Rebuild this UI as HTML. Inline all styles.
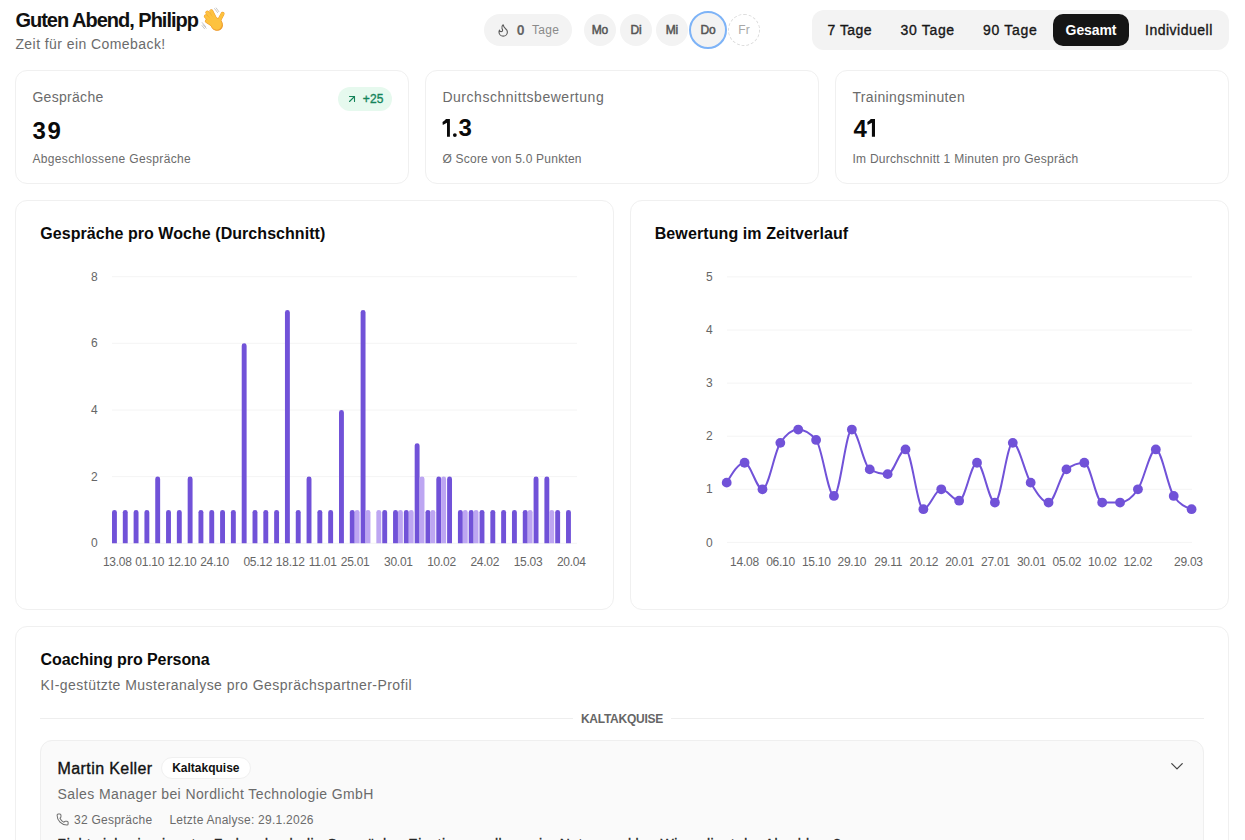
<!DOCTYPE html>
<html><head><meta charset="utf-8"><title>Dashboard</title>
<style>
html,body{margin:0;padding:0;background:#fff;width:1245px;height:840px;overflow:hidden;position:relative}
body{font-family:"Liberation Sans", sans-serif}
.t{position:absolute;white-space:nowrap}
.b{position:absolute}
</style></head><body>
<div class="t" style="left:15.40px;top:10.27px;font-size:20px;line-height:20px;font-weight:700;color:#111;letter-spacing:-1.0px;">Guten Abend, Philipp</div>
<svg class="b" style="left:196px;top:4px" width="36" height="30" viewBox="0 0 36 30">
<g stroke="#b9b9b9" stroke-width="0.8" stroke-linecap="round">
<line x1="18.6" y1="4.6" x2="21.6" y2="8.6"/><line x1="20.2" y1="4.0" x2="22.8" y2="7.6"/>
<line x1="6.2" y1="18.6" x2="9.6" y2="22.6"/><line x1="7.2" y1="20.8" x2="10.2" y2="24.2"/><line x1="6.0" y1="21.6" x2="8.6" y2="24.8"/>
</g>
<g stroke="#ee9b2c" stroke-linecap="round" stroke-width="3.9" fill="#ee9b2c">
<line x1="19.5" y1="15.5" x2="15.3" y2="7.2"/><line x1="17.5" y1="16.5" x2="11.3" y2="8.5"/>
<line x1="16.5" y1="18.5" x2="9.8" y2="12.3"/><line x1="17" y1="21" x2="10.8" y2="17"/>
<line x1="22.5" y1="17.5" x2="26.6" y2="9.8"/>
<ellipse cx="20.6" cy="20.2" rx="5.6" ry="6.4" transform="rotate(-35 20.6 20.2)" stroke-width="1"/>
</g>
<g stroke="#fdc23f" stroke-linecap="round" stroke-width="3.0" fill="#fdc23f">
<line x1="19.5" y1="15.5" x2="15.3" y2="7.2"/><line x1="17.5" y1="16.5" x2="11.3" y2="8.5"/>
<line x1="16.5" y1="18.5" x2="9.8" y2="12.3"/><line x1="17" y1="21" x2="10.8" y2="17"/>
<line x1="22.5" y1="17.5" x2="26.6" y2="9.8"/>
<ellipse cx="20.3" cy="19.9" rx="5.3" ry="6.0" transform="rotate(-35 20.3 19.9)" stroke="none"/>
</g>
</svg>
<div class="t" style="left:15.40px;top:36.75px;font-size:14px;line-height:14px;font-weight:400;color:#6b6b6b;letter-spacing:0.43px;">Zeit für ein Comeback!</div>
<div class="b" style="left:484px;top:14px;width:88px;height:32px;background:#f3f3f3;border-radius:16px"></div>
<svg class="b" style="left:495.8px;top:23px" width="14.4" height="14.4" viewBox="0 0 24 24" fill="none" stroke="#5a5a5a" stroke-width="1.9" stroke-linecap="round" stroke-linejoin="round"><path d="M8.5 14.5A2.5 2.5 0 0 0 11 12c0-1.38-.5-2-1-3-1.072-2.143-.224-4.054 2-6 .5 2.5 2 4.9 4 6.5 2 1.6 3 3.5 3 5.5a7 7 0 1 1-14 0c0-1.153.433-2.294 1-3a2.5 2.5 0 0 0 2.5 2.5z"/></svg>
<div class="t" style="left:516.70px;top:22.75px;font-size:14px;line-height:14px;font-weight:700;color:#666;letter-spacing:0.5px;">0</div>
<div class="t" style="left:532.00px;top:23.84px;font-size:12px;line-height:12px;font-weight:400;color:#8a8a8a;letter-spacing:0.3px;">Tage</div>
<div class="b" style="left:584px;top:14px;width:32px;height:32px;background:#f3f3f3;border-radius:50%"></div>
<div class="t" style="left:580.00px;width:40px;text-align:center;top:23.64px;font-size:12px;line-height:12px;font-weight:400;color:#555;letter-spacing:-0.1px;text-indent:-0.1px;-webkit-text-stroke:0.5px currentColor">Mo</div>
<div class="b" style="left:620px;top:14px;width:32px;height:32px;background:#f3f3f3;border-radius:50%"></div>
<div class="t" style="left:616.00px;width:40px;text-align:center;top:23.64px;font-size:12px;line-height:12px;font-weight:400;color:#555;letter-spacing:-0.1px;text-indent:-0.1px;-webkit-text-stroke:0.5px currentColor">Di</div>
<div class="b" style="left:656px;top:14px;width:32px;height:32px;background:#f3f3f3;border-radius:50%"></div>
<div class="t" style="left:652.00px;width:40px;text-align:center;top:23.64px;font-size:12px;line-height:12px;font-weight:400;color:#555;letter-spacing:-0.1px;text-indent:-0.1px;-webkit-text-stroke:0.5px currentColor">Mi</div>
<div class="b" style="left:689px;top:11px;width:38px;height:38px;background:#f3f3f3;border:2px solid #7db3f7;border-radius:50%;box-sizing:border-box"></div>
<div class="t" style="left:688.00px;width:40px;text-align:center;top:23.64px;font-size:12px;line-height:12px;font-weight:400;color:#555;letter-spacing:-0.1px;text-indent:-0.1px;-webkit-text-stroke:0.5px currentColor">Do</div>
<div class="b" style="left:728px;top:14px;width:32px;height:32px;border:1px dashed #dcdcdc;border-radius:50%;box-sizing:border-box"></div>
<div class="t" style="left:724.00px;width:40px;text-align:center;top:23.64px;font-size:12px;line-height:12px;font-weight:400;color:#a8a8a8;letter-spacing:0px;text-indent:0px;">Fr</div>
<div class="b" style="left:812px;top:10px;width:417px;height:40px;background:#f3f3f3;border-radius:12px"></div>
<div class="b" style="left:1053px;top:14px;width:76px;height:32px;background:#151515;border-radius:10px"></div>
<div class="t" style="left:827.60px;top:23.15px;font-size:14px;line-height:14px;font-weight:400;color:#171717;letter-spacing:0.45px;-webkit-text-stroke:0.35px currentColor">7 Tage</div>
<div class="t" style="left:900.40px;top:23.15px;font-size:14px;line-height:14px;font-weight:400;color:#171717;letter-spacing:0.7px;-webkit-text-stroke:0.35px currentColor">30 Tage</div>
<div class="t" style="left:983.00px;top:23.15px;font-size:14px;line-height:14px;font-weight:400;color:#171717;letter-spacing:0.7px;-webkit-text-stroke:0.35px currentColor">90 Tage</div>
<div class="t" style="left:1065.60px;top:23.15px;font-size:14px;line-height:14px;font-weight:700;color:#ffffff;letter-spacing:-0.1px;">Gesamt</div>
<div class="t" style="left:1145.00px;top:23.15px;font-size:14px;line-height:14px;font-weight:400;color:#171717;letter-spacing:0.5px;-webkit-text-stroke:0.35px currentColor">Individuell</div>
<div class="b" style="left:15px;top:70px;width:394px;height:114px;border:1px solid #f0f0f0;border-radius:12px;box-sizing:border-box;background:#fff"></div>
<div class="t" style="left:32.40px;top:89.85px;font-size:14px;line-height:14px;font-weight:400;color:#6b6b6b;letter-spacing:0.3px;">Gespräche</div>
<div class="t" style="left:32.40px;top:118.68px;font-size:24px;line-height:24px;font-weight:700;color:#0a0a0a;letter-spacing:0px;">3</div>
<div class="t" style="left:47.50px;top:118.68px;font-size:24px;line-height:24px;font-weight:700;color:#0a0a0a;letter-spacing:0px;">9</div>
<div class="t" style="left:32.40px;top:152.64px;font-size:12px;line-height:12px;font-weight:400;color:#6b6b6b;letter-spacing:0.36px;">Abgeschlossene Gespräche</div>
<div class="b" style="left:425px;top:70px;width:394px;height:114px;border:1px solid #f0f0f0;border-radius:12px;box-sizing:border-box;background:#fff"></div>
<div class="t" style="left:442.40px;top:89.85px;font-size:14px;line-height:14px;font-weight:400;color:#6b6b6b;letter-spacing:0.53px;">Durchschnittsbewertung</div>
<div class="t" style="left:458.40px;top:116.38px;font-size:24px;line-height:24px;font-weight:700;color:#0a0a0a;letter-spacing:0px;">3</div>
<div class="t" style="left:442.40px;top:152.64px;font-size:12px;line-height:12px;font-weight:400;color:#6b6b6b;letter-spacing:0.23px;">Ø Score von 5.0 Punkten</div>
<div class="b" style="left:835px;top:70px;width:394px;height:114px;border:1px solid #f0f0f0;border-radius:12px;box-sizing:border-box;background:#fff"></div>
<div class="t" style="left:852.40px;top:89.85px;font-size:14px;line-height:14px;font-weight:400;color:#6b6b6b;letter-spacing:0.37px;">Trainingsminuten</div>
<div class="t" style="left:853.40px;top:116.58px;font-size:24px;line-height:24px;font-weight:700;color:#0a0a0a;letter-spacing:0px;">4</div>
<div class="t" style="left:852.40px;top:152.64px;font-size:12px;line-height:12px;font-weight:400;color:#6b6b6b;letter-spacing:0.28px;">Im Durchschnitt 1 Minuten pro Gespräch</div>
<svg class="b" style="left:0;top:0" width="1245" height="200"><g fill="#0a0a0a"><path d="M447,119.1 L449.9,119.1 L449.9,136.7 L447,136.7 L447,122.8 L442.8,125.0 L442.5,122.1 Q444.9,120.6 446.0,119.1 Z"/><circle cx="454.85" cy="135.1" r="1.9"/><path d="M871.9,119.1 L875,119.1 L875,136.8 L871.9,136.8 L871.9,122.8 L867.6,125.0 L867.3,122.1 Q869.7,120.6 870.8,119.1 Z"/></g></svg>
<div class="b" style="left:338px;top:87px;width:54px;height:24px;background:#e6f9ee;border-radius:12px"></div>
<svg class="b" style="left:346px;top:93px" width="12" height="12" viewBox="0 0 24 24" fill="none" stroke="#15845a" stroke-width="2.2" stroke-linecap="round" stroke-linejoin="round"><path d="M7 7h10v10"/><path d="M7 17 17 7"/></svg>
<div class="t" style="left:362.80px;top:92.84px;font-size:12px;line-height:12px;font-weight:400;color:#15845a;letter-spacing:0.1px;-webkit-text-stroke:0.35px currentColor">+25</div>
<div class="b" style="left:15px;top:200px;width:599px;height:410px;border:1px solid #f0f0f0;border-radius:12px;box-sizing:border-box;background:#fff"></div>
<div class="b" style="left:630px;top:200px;width:599px;height:410px;border:1px solid #f0f0f0;border-radius:12px;box-sizing:border-box;background:#fff"></div>
<div class="t" style="left:40.30px;top:226.06px;font-size:16px;line-height:16px;font-weight:700;color:#0a0a0a;letter-spacing:0.05px;">Gespräche pro Woche (Durchschnitt)</div>
<div class="t" style="left:654.70px;top:226.06px;font-size:16px;line-height:16px;font-weight:700;color:#0a0a0a;letter-spacing:0.1px;">Bewertung im Zeitverlauf</div>
<svg class="b" style="left:0;top:0" width="1245" height="840">
<line x1="112" y1="543.3" x2="577" y2="543.3" stroke="#f4f4f4" stroke-width="1"/>
<line x1="112" y1="476.6" x2="577" y2="476.6" stroke="#f4f4f4" stroke-width="1"/>
<line x1="112" y1="410.0" x2="577" y2="410.0" stroke="#f4f4f4" stroke-width="1"/>
<line x1="112" y1="343.3" x2="577" y2="343.3" stroke="#f4f4f4" stroke-width="1"/>
<line x1="112" y1="276.7" x2="577" y2="276.7" stroke="#f4f4f4" stroke-width="1"/>
<path d="M112.00,543.30 V512.37 A2.4,2.4 0 0 1 116.90,512.37 V543.30 Z" fill="#7152d8"/>
<path d="M122.81,543.30 V512.37 A2.4,2.4 0 0 1 127.71,512.37 V543.30 Z" fill="#7152d8"/>
<path d="M133.62,543.30 V512.37 A2.4,2.4 0 0 1 138.52,512.37 V543.30 Z" fill="#7152d8"/>
<path d="M144.43,543.30 V512.37 A2.4,2.4 0 0 1 149.33,512.37 V543.30 Z" fill="#7152d8"/>
<path d="M155.24,543.30 V479.04 A2.4,2.4 0 0 1 160.14,479.04 V543.30 Z" fill="#7152d8"/>
<path d="M166.05,543.30 V512.37 A2.4,2.4 0 0 1 170.95,512.37 V543.30 Z" fill="#7152d8"/>
<path d="M176.86,543.30 V512.37 A2.4,2.4 0 0 1 181.76,512.37 V543.30 Z" fill="#7152d8"/>
<path d="M187.67,543.30 V479.04 A2.4,2.4 0 0 1 192.57,479.04 V543.30 Z" fill="#7152d8"/>
<path d="M198.48,543.30 V512.37 A2.4,2.4 0 0 1 203.38,512.37 V543.30 Z" fill="#7152d8"/>
<path d="M209.29,543.30 V512.37 A2.4,2.4 0 0 1 214.19,512.37 V543.30 Z" fill="#7152d8"/>
<path d="M220.10,543.30 V512.37 A2.4,2.4 0 0 1 225.00,512.37 V543.30 Z" fill="#7152d8"/>
<path d="M230.91,543.30 V512.37 A2.4,2.4 0 0 1 235.81,512.37 V543.30 Z" fill="#7152d8"/>
<path d="M241.72,543.30 V345.72 A2.4,2.4 0 0 1 246.62,345.72 V543.30 Z" fill="#7152d8"/>
<path d="M252.53,543.30 V512.37 A2.4,2.4 0 0 1 257.43,512.37 V543.30 Z" fill="#7152d8"/>
<path d="M263.34,543.30 V512.37 A2.4,2.4 0 0 1 268.24,512.37 V543.30 Z" fill="#7152d8"/>
<path d="M274.15,543.30 V512.37 A2.4,2.4 0 0 1 279.05,512.37 V543.30 Z" fill="#7152d8"/>
<path d="M284.96,543.30 V312.39 A2.4,2.4 0 0 1 289.86,312.39 V543.30 Z" fill="#7152d8"/>
<path d="M295.77,543.30 V512.37 A2.4,2.4 0 0 1 300.67,512.37 V543.30 Z" fill="#7152d8"/>
<path d="M306.58,543.30 V479.04 A2.4,2.4 0 0 1 311.48,479.04 V543.30 Z" fill="#7152d8"/>
<path d="M317.39,543.30 V512.37 A2.4,2.4 0 0 1 322.29,512.37 V543.30 Z" fill="#7152d8"/>
<path d="M328.20,543.30 V512.37 A2.4,2.4 0 0 1 333.10,512.37 V543.30 Z" fill="#7152d8"/>
<path d="M339.01,543.30 V412.38 A2.4,2.4 0 0 1 343.91,412.38 V543.30 Z" fill="#7152d8"/>
<path d="M349.82,543.30 V512.37 A2.4,2.4 0 0 1 354.72,512.37 V543.30 Z" fill="#7152d8"/>
<path d="M354.72,543.30 V512.37 A2.4,2.4 0 0 1 359.62,512.37 V543.30 Z" fill="#bda6f2"/>
<path d="M360.63,543.30 V312.39 A2.4,2.4 0 0 1 365.53,312.39 V543.30 Z" fill="#7152d8"/>
<path d="M365.53,543.30 V512.37 A2.4,2.4 0 0 1 370.43,512.37 V543.30 Z" fill="#bda6f2"/>
<path d="M376.34,543.30 V512.37 A2.4,2.4 0 0 1 381.24,512.37 V543.30 Z" fill="#bda6f2"/>
<path d="M382.25,543.30 V512.37 A2.4,2.4 0 0 1 387.15,512.37 V543.30 Z" fill="#7152d8"/>
<path d="M393.06,543.30 V512.37 A2.4,2.4 0 0 1 397.96,512.37 V543.30 Z" fill="#7152d8"/>
<path d="M397.96,543.30 V512.37 A2.4,2.4 0 0 1 402.86,512.37 V543.30 Z" fill="#bda6f2"/>
<path d="M403.87,543.30 V512.37 A2.4,2.4 0 0 1 408.77,512.37 V543.30 Z" fill="#7152d8"/>
<path d="M408.77,543.30 V512.37 A2.4,2.4 0 0 1 413.67,512.37 V543.30 Z" fill="#bda6f2"/>
<path d="M414.68,543.30 V445.71 A2.4,2.4 0 0 1 419.58,445.71 V543.30 Z" fill="#7152d8"/>
<path d="M419.58,543.30 V479.04 A2.4,2.4 0 0 1 424.48,479.04 V543.30 Z" fill="#bda6f2"/>
<path d="M425.49,543.30 V512.37 A2.4,2.4 0 0 1 430.39,512.37 V543.30 Z" fill="#7152d8"/>
<path d="M430.39,543.30 V512.37 A2.4,2.4 0 0 1 435.29,512.37 V543.30 Z" fill="#bda6f2"/>
<path d="M436.30,543.30 V479.04 A2.4,2.4 0 0 1 441.20,479.04 V543.30 Z" fill="#7152d8"/>
<path d="M441.20,543.30 V479.04 A2.4,2.4 0 0 1 446.10,479.04 V543.30 Z" fill="#bda6f2"/>
<path d="M447.11,543.30 V479.04 A2.4,2.4 0 0 1 452.01,479.04 V543.30 Z" fill="#7152d8"/>
<path d="M457.92,543.30 V512.37 A2.4,2.4 0 0 1 462.82,512.37 V543.30 Z" fill="#7152d8"/>
<path d="M462.82,543.30 V512.37 A2.4,2.4 0 0 1 467.72,512.37 V543.30 Z" fill="#bda6f2"/>
<path d="M468.73,543.30 V512.37 A2.4,2.4 0 0 1 473.63,512.37 V543.30 Z" fill="#7152d8"/>
<path d="M473.63,543.30 V512.37 A2.4,2.4 0 0 1 478.53,512.37 V543.30 Z" fill="#bda6f2"/>
<path d="M479.54,543.30 V512.37 A2.4,2.4 0 0 1 484.44,512.37 V543.30 Z" fill="#7152d8"/>
<path d="M490.35,543.30 V512.37 A2.4,2.4 0 0 1 495.25,512.37 V543.30 Z" fill="#7152d8"/>
<path d="M501.16,543.30 V512.37 A2.4,2.4 0 0 1 506.06,512.37 V543.30 Z" fill="#7152d8"/>
<path d="M511.97,543.30 V512.37 A2.4,2.4 0 0 1 516.87,512.37 V543.30 Z" fill="#7152d8"/>
<path d="M522.78,543.30 V512.37 A2.4,2.4 0 0 1 527.68,512.37 V543.30 Z" fill="#7152d8"/>
<path d="M527.68,543.30 V512.37 A2.4,2.4 0 0 1 532.58,512.37 V543.30 Z" fill="#bda6f2"/>
<path d="M533.59,543.30 V479.04 A2.4,2.4 0 0 1 538.49,479.04 V543.30 Z" fill="#7152d8"/>
<path d="M544.40,543.30 V479.04 A2.4,2.4 0 0 1 549.30,479.04 V543.30 Z" fill="#7152d8"/>
<path d="M549.30,543.30 V512.37 A2.4,2.4 0 0 1 554.20,512.37 V543.30 Z" fill="#bda6f2"/>
<path d="M555.21,543.30 V512.37 A2.4,2.4 0 0 1 560.11,512.37 V543.30 Z" fill="#7152d8"/>
<path d="M566.02,543.30 V512.37 A2.4,2.4 0 0 1 570.92,512.37 V543.30 Z" fill="#7152d8"/>
<line x1="727" y1="542.4" x2="1192" y2="542.4" stroke="#f4f4f4" stroke-width="1"/>
<line x1="727" y1="489.3" x2="1192" y2="489.3" stroke="#f4f4f4" stroke-width="1"/>
<line x1="727" y1="436.2" x2="1192" y2="436.2" stroke="#f4f4f4" stroke-width="1"/>
<line x1="727" y1="383.1" x2="1192" y2="383.1" stroke="#f4f4f4" stroke-width="1"/>
<line x1="727" y1="330.0" x2="1192" y2="330.0" stroke="#f4f4f4" stroke-width="1"/>
<line x1="727" y1="276.9" x2="1192" y2="276.9" stroke="#f4f4f4" stroke-width="1"/>
<path d="M726.70,482.66 C732.66,472.71 738.62,462.75 744.58,462.75 C750.54,462.75 756.50,489.30 762.46,489.30 C768.42,489.30 774.38,451.69 780.34,442.84 C786.30,433.99 792.26,429.56 798.22,429.56 C804.18,429.56 810.14,433.01 816.10,439.92 C822.06,446.82 828.02,495.94 833.98,495.94 C839.94,495.94 845.90,429.56 851.86,429.56 C857.82,429.56 863.78,466.23 869.74,469.39 C875.70,472.55 881.66,474.13 887.62,474.13 C893.58,474.13 899.54,449.47 905.50,449.47 C911.46,449.47 917.42,509.21 923.38,509.21 C929.34,509.21 935.30,489.30 941.26,489.30 C947.22,489.30 953.18,500.68 959.14,500.68 C965.10,500.68 971.06,462.75 977.02,462.75 C982.98,462.75 988.94,502.57 994.90,502.57 C1000.86,502.57 1006.82,442.84 1012.78,442.84 C1018.74,442.84 1024.70,472.71 1030.66,482.66 C1036.62,492.62 1042.58,502.57 1048.54,502.57 C1054.50,502.57 1060.46,473.81 1066.42,469.39 C1072.38,464.96 1078.34,462.75 1084.30,462.75 C1090.26,462.75 1096.22,502.57 1102.18,502.57 C1108.14,502.57 1114.10,502.57 1120.06,502.57 C1126.02,502.57 1131.98,498.15 1137.94,489.30 C1143.90,480.45 1149.86,449.47 1155.82,449.47 C1161.78,449.47 1167.74,487.09 1173.70,495.94 C1179.66,504.79 1185.62,507.00 1191.58,509.21" fill="none" stroke="#7152d8" stroke-width="2"/>
<circle cx="726.70" cy="482.66" r="4.9" fill="#7152d8"/>
<circle cx="744.58" cy="462.75" r="4.9" fill="#7152d8"/>
<circle cx="762.46" cy="489.30" r="4.9" fill="#7152d8"/>
<circle cx="780.34" cy="442.84" r="4.9" fill="#7152d8"/>
<circle cx="798.22" cy="429.56" r="4.9" fill="#7152d8"/>
<circle cx="816.10" cy="439.92" r="4.9" fill="#7152d8"/>
<circle cx="833.98" cy="495.94" r="4.9" fill="#7152d8"/>
<circle cx="851.86" cy="429.56" r="4.9" fill="#7152d8"/>
<circle cx="869.74" cy="469.39" r="4.9" fill="#7152d8"/>
<circle cx="887.62" cy="474.13" r="4.9" fill="#7152d8"/>
<circle cx="905.50" cy="449.47" r="4.9" fill="#7152d8"/>
<circle cx="923.38" cy="509.21" r="4.9" fill="#7152d8"/>
<circle cx="941.26" cy="489.30" r="4.9" fill="#7152d8"/>
<circle cx="959.14" cy="500.68" r="4.9" fill="#7152d8"/>
<circle cx="977.02" cy="462.75" r="4.9" fill="#7152d8"/>
<circle cx="994.90" cy="502.57" r="4.9" fill="#7152d8"/>
<circle cx="1012.78" cy="442.84" r="4.9" fill="#7152d8"/>
<circle cx="1030.66" cy="482.66" r="4.9" fill="#7152d8"/>
<circle cx="1048.54" cy="502.57" r="4.9" fill="#7152d8"/>
<circle cx="1066.42" cy="469.39" r="4.9" fill="#7152d8"/>
<circle cx="1084.30" cy="462.75" r="4.9" fill="#7152d8"/>
<circle cx="1102.18" cy="502.57" r="4.9" fill="#7152d8"/>
<circle cx="1120.06" cy="502.57" r="4.9" fill="#7152d8"/>
<circle cx="1137.94" cy="489.30" r="4.9" fill="#7152d8"/>
<circle cx="1155.82" cy="449.47" r="4.9" fill="#7152d8"/>
<circle cx="1173.70" cy="495.94" r="4.9" fill="#7152d8"/>
<circle cx="1191.58" cy="509.21" r="4.9" fill="#7152d8"/>
</svg>
<div class="t" style="left:67.60px;width:30px;text-align:right;top:537.44px;font-size:12px;line-height:12px;font-weight:400;color:#666">0</div>
<div class="t" style="left:67.60px;width:30px;text-align:right;top:470.78px;font-size:12px;line-height:12px;font-weight:400;color:#666">2</div>
<div class="t" style="left:67.60px;width:30px;text-align:right;top:404.12px;font-size:12px;line-height:12px;font-weight:400;color:#666">4</div>
<div class="t" style="left:67.60px;width:30px;text-align:right;top:337.46px;font-size:12px;line-height:12px;font-weight:400;color:#666">6</div>
<div class="t" style="left:67.60px;width:30px;text-align:right;top:270.80px;font-size:12px;line-height:12px;font-weight:400;color:#666">8</div>
<div class="t" style="left:87.41px;width:60px;text-align:center;top:556.24px;font-size:12px;line-height:12px;font-weight:400;color:#666;letter-spacing:-0.25px;text-indent:-0.25px;">13.08</div>
<div class="t" style="left:119.84px;width:60px;text-align:center;top:556.24px;font-size:12px;line-height:12px;font-weight:400;color:#666;letter-spacing:-0.25px;text-indent:-0.25px;">01.10</div>
<div class="t" style="left:152.26px;width:60px;text-align:center;top:556.24px;font-size:12px;line-height:12px;font-weight:400;color:#666;letter-spacing:-0.25px;text-indent:-0.25px;">12.10</div>
<div class="t" style="left:184.69px;width:60px;text-align:center;top:556.24px;font-size:12px;line-height:12px;font-weight:400;color:#666;letter-spacing:-0.25px;text-indent:-0.25px;">24.10</div>
<div class="t" style="left:227.94px;width:60px;text-align:center;top:556.24px;font-size:12px;line-height:12px;font-weight:400;color:#666;letter-spacing:-0.25px;text-indent:-0.25px;">05.12</div>
<div class="t" style="left:260.37px;width:60px;text-align:center;top:556.24px;font-size:12px;line-height:12px;font-weight:400;color:#666;letter-spacing:-0.25px;text-indent:-0.25px;">18.12</div>
<div class="t" style="left:292.80px;width:60px;text-align:center;top:556.24px;font-size:12px;line-height:12px;font-weight:400;color:#666;letter-spacing:-0.25px;text-indent:-0.25px;">11.01</div>
<div class="t" style="left:325.23px;width:60px;text-align:center;top:556.24px;font-size:12px;line-height:12px;font-weight:400;color:#666;letter-spacing:-0.25px;text-indent:-0.25px;">25.01</div>
<div class="t" style="left:368.47px;width:60px;text-align:center;top:556.24px;font-size:12px;line-height:12px;font-weight:400;color:#666;letter-spacing:-0.25px;text-indent:-0.25px;">30.01</div>
<div class="t" style="left:411.71px;width:60px;text-align:center;top:556.24px;font-size:12px;line-height:12px;font-weight:400;color:#666;letter-spacing:-0.25px;text-indent:-0.25px;">10.02</div>
<div class="t" style="left:454.94px;width:60px;text-align:center;top:556.24px;font-size:12px;line-height:12px;font-weight:400;color:#666;letter-spacing:-0.25px;text-indent:-0.25px;">24.02</div>
<div class="t" style="left:498.18px;width:60px;text-align:center;top:556.24px;font-size:12px;line-height:12px;font-weight:400;color:#666;letter-spacing:-0.25px;text-indent:-0.25px;">15.03</div>
<div class="t" style="left:541.42px;width:60px;text-align:center;top:556.24px;font-size:12px;line-height:12px;font-weight:400;color:#666;letter-spacing:-0.25px;text-indent:-0.25px;">20.04</div>
<div class="t" style="left:682.80px;width:30px;text-align:right;top:536.54px;font-size:12px;line-height:12px;font-weight:400;color:#666">0</div>
<div class="t" style="left:682.80px;width:30px;text-align:right;top:483.44px;font-size:12px;line-height:12px;font-weight:400;color:#666">1</div>
<div class="t" style="left:682.80px;width:30px;text-align:right;top:430.34px;font-size:12px;line-height:12px;font-weight:400;color:#666">2</div>
<div class="t" style="left:682.80px;width:30px;text-align:right;top:377.24px;font-size:12px;line-height:12px;font-weight:400;color:#666">3</div>
<div class="t" style="left:682.80px;width:30px;text-align:right;top:324.14px;font-size:12px;line-height:12px;font-weight:400;color:#666">4</div>
<div class="t" style="left:682.80px;width:30px;text-align:right;top:271.04px;font-size:12px;line-height:12px;font-weight:400;color:#666">5</div>
<div class="t" style="left:714.60px;width:60px;text-align:center;top:556.34px;font-size:12px;line-height:12px;font-weight:400;color:#666;letter-spacing:-0.25px;text-indent:-0.25px;">14.08</div>
<div class="t" style="left:750.70px;width:60px;text-align:center;top:556.34px;font-size:12px;line-height:12px;font-weight:400;color:#666;letter-spacing:-0.25px;text-indent:-0.25px;">06.10</div>
<div class="t" style="left:786.40px;width:60px;text-align:center;top:556.34px;font-size:12px;line-height:12px;font-weight:400;color:#666;letter-spacing:-0.25px;text-indent:-0.25px;">15.10</div>
<div class="t" style="left:822.00px;width:60px;text-align:center;top:556.34px;font-size:12px;line-height:12px;font-weight:400;color:#666;letter-spacing:-0.25px;text-indent:-0.25px;">29.10</div>
<div class="t" style="left:858.30px;width:60px;text-align:center;top:556.34px;font-size:12px;line-height:12px;font-weight:400;color:#666;letter-spacing:-0.25px;text-indent:-0.25px;">29.11</div>
<div class="t" style="left:894.00px;width:60px;text-align:center;top:556.34px;font-size:12px;line-height:12px;font-weight:400;color:#666;letter-spacing:-0.25px;text-indent:-0.25px;">20.12</div>
<div class="t" style="left:929.70px;width:60px;text-align:center;top:556.34px;font-size:12px;line-height:12px;font-weight:400;color:#666;letter-spacing:-0.25px;text-indent:-0.25px;">20.01</div>
<div class="t" style="left:965.50px;width:60px;text-align:center;top:556.34px;font-size:12px;line-height:12px;font-weight:400;color:#666;letter-spacing:-0.25px;text-indent:-0.25px;">27.01</div>
<div class="t" style="left:1001.40px;width:60px;text-align:center;top:556.34px;font-size:12px;line-height:12px;font-weight:400;color:#666;letter-spacing:-0.25px;text-indent:-0.25px;">30.01</div>
<div class="t" style="left:1037.00px;width:60px;text-align:center;top:556.34px;font-size:12px;line-height:12px;font-weight:400;color:#666;letter-spacing:-0.25px;text-indent:-0.25px;">05.02</div>
<div class="t" style="left:1072.50px;width:60px;text-align:center;top:556.34px;font-size:12px;line-height:12px;font-weight:400;color:#666;letter-spacing:-0.25px;text-indent:-0.25px;">10.02</div>
<div class="t" style="left:1108.00px;width:60px;text-align:center;top:556.34px;font-size:12px;line-height:12px;font-weight:400;color:#666;letter-spacing:-0.25px;text-indent:-0.25px;">12.02</div>
<div class="t" style="left:1158.50px;width:60px;text-align:center;top:556.34px;font-size:12px;line-height:12px;font-weight:400;color:#666;letter-spacing:-0.25px;text-indent:-0.25px;">29.03</div>
<div class="b" style="left:15px;top:626px;width:1214px;height:400px;border:1px solid #f0f0f0;border-radius:12px;box-sizing:border-box;background:#fff"></div>
<div class="t" style="left:40.50px;top:652.16px;font-size:16px;line-height:16px;font-weight:700;color:#0a0a0a;letter-spacing:-0.08px;">Coaching pro Persona</div>
<div class="t" style="left:40.50px;top:677.95px;font-size:14px;line-height:14px;font-weight:400;color:#6b6b6b;letter-spacing:0.47px;">KI-gestützte Musteranalyse pro Gesprächspartner-Profil</div>
<div class="b" style="left:40px;top:718px;width:533px;height:1px;background:#eeeeee"></div>
<div class="b" style="left:671px;top:718px;width:533px;height:1px;background:#eeeeee"></div>
<div class="t" style="left:580.90px;top:712.94px;font-size:12px;line-height:12px;font-weight:700;color:#666;letter-spacing:-0.25px;">KALTAKQUISE</div>
<div class="b" style="left:40px;top:739.5px;width:1164px;height:300px;background:#fafafa;border:1px solid #efefef;border-radius:12px;box-sizing:border-box"></div>
<div class="t" style="left:57.60px;top:761.26px;font-size:16px;line-height:16px;font-weight:400;color:#111;letter-spacing:0.4px;-webkit-text-stroke:0.35px currentColor">Martin Keller</div>
<div class="b" style="left:161px;top:757px;width:90px;height:22px;background:#fff;border:1px solid #f0f0f0;border-radius:11px;box-sizing:border-box"></div>
<div class="t" style="left:172.20px;top:761.84px;font-size:12px;line-height:12px;font-weight:700;color:#111;letter-spacing:0px;">Kaltakquise</div>
<svg class="b" style="left:1170px;top:759px" width="14" height="14" viewBox="0 0 24 24" fill="none" stroke="#444" stroke-width="2.2" stroke-linecap="round" stroke-linejoin="round"><path d="m3 8 9 9 9-9"/></svg>
<div class="t" style="left:57.60px;top:787.15px;font-size:14px;line-height:14px;font-weight:400;color:#6b6b6b;letter-spacing:0.4px;">Sales Manager bei Nordlicht Technologie GmbH</div>
<svg class="b" style="left:56.4px;top:813.4px" width="13.2" height="13.2" viewBox="0 0 24 24" fill="none" stroke="#707070" stroke-width="1.9" stroke-linecap="round" stroke-linejoin="round"><path d="M13.832 16.568a1 1 0 0 0 1.213-.303l.355-.465A2 2 0 0 1 17 15h3a2 2 0 0 1 2 2v3a2 2 0 0 1-2 2A18 18 0 0 1 2 4a2 2 0 0 1 2-2h3a2 2 0 0 1 2 2v3a2 2 0 0 1-.8 1.6l-.468.351a1 1 0 0 0-.292 1.233 14 14 0 0 0 6.392 6.384"/></svg>
<div class="t" style="left:74.00px;top:813.74px;font-size:12px;line-height:12px;font-weight:400;color:#6b6b6b;letter-spacing:0.25px;">32 Gespräche</div>
<div class="t" style="left:169.40px;top:813.74px;font-size:12px;line-height:12px;font-weight:400;color:#6b6b6b;letter-spacing:0.25px;">Letzte Analyse: 29.1.2026</div>
<div class="t" style="left:57.60px;top:837.35px;font-size:14px;line-height:14px;font-weight:400;color:#262626;letter-spacing:0.49px;-webkit-text-stroke:0.3px currentColor">Zieht sich wie ein roter Faden durch die Gespräche: Einstieg zu allgemein, Nutzen unklar. Wie gelingt der Abschluss?</div>
</body></html>
